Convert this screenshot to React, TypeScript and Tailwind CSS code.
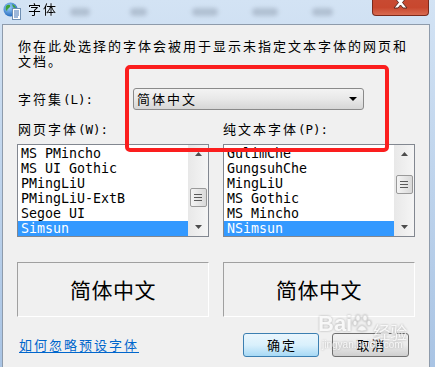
import React from "react";

const CJK = "font-['Noto_Sans_CJK_SC',sans-serif]";

function Label({ cjk, ascii }: { cjk: string; ascii: string }) {
  return (
    <span className="whitespace-nowrap">
      {cjk}
      <span className="font-['DejaVu_Sans_Mono',monospace] text-[12.5px] tracking-normal">{ascii}</span>
    </span>
  );
}

function Scrollbar({ thumbPad }: { thumbPad: string }) {
  return (
    <div className="w-[20px] flex flex-col bg-gradient-to-r from-[#e8e8e8] to-[#f5f5f5]">
      <div className="h-[18px] flex items-center justify-center">
        <svg width="7" height="4" viewBox="0 0 7 4">
          <path d="M0 4 L3.5 0 L7 4 Z" fill="#4d4d4d" />
        </svg>
      </div>
      <div className={`flex-1 ${thumbPad} flex justify-center`}>
        <div className="w-[17px] h-[19px] rounded-[2px] border border-[#9a9a9a] bg-gradient-to-r from-[#f4f4f4] to-[#d9d9d9] flex flex-col items-center justify-center gap-[2px]">
          <div className="w-[8px] h-[1px] bg-[#5a5a5a]" />
          <div className="w-[8px] h-[1px] bg-[#5a5a5a]" />
          <div className="w-[8px] h-[1px] bg-[#5a5a5a]" />
        </div>
      </div>
      <div className="h-[18px] flex items-center justify-center">
        <svg width="7" height="4" viewBox="0 0 7 4">
          <path d="M0 0 L7 0 L3.5 4 Z" fill="#4d4d4d" />
        </svg>
      </div>
    </div>
  );
}

function ListBox({ items, thumbPad }: { items: string[]; thumbPad: string }) {
  return (
    <div className="w-[192px] h-[93px] border border-[#828790] bg-white flex">
      <div className="flex-1 pt-[1px] overflow-hidden font-['DejaVu_Sans_Mono',monospace] text-[13.3px]">
        {items.map((it, i) => (
          <div
            key={it}
            className={
              i === items.length - 1
                ? "h-[15px] leading-[15px] pl-[3px] whitespace-nowrap bg-[#3399ff] text-white"
                : "h-[15px] leading-[15px] pl-[3px] whitespace-nowrap text-black"
            }
          >
            {it}
          </div>
        ))}
      </div>
      <Scrollbar thumbPad={thumbPad} />
    </div>
  );
}

function Preview() {
  return (
    <div className="w-[192px] h-[55px] border border-t-[#a0a0a0] border-l-[#a0a0a0] border-r-white border-b-white flex items-center justify-center text-[21px] tracking-[0.5px] text-black">
      简体中文
    </div>
  );
}

export default function App() {
  return (
    <div className={`relative w-[435px] h-[367px] overflow-hidden bg-gradient-to-b from-[#d3e3f4] to-[#a9c4e4] ${CJK}`}>
      {/* blurred background menu seen through glass */}
      <div className="absolute left-[70px] top-[8px] w-[20px] h-[8px] rounded-sm bg-[#a3b2c4] blur-[2px] opacity-70" />
      <div className="absolute left-[130px] top-[8px] w-[17px] h-[8px] rounded-sm bg-[#a3b2c4] blur-[2px] opacity-70" />
      <div className="absolute left-[192px] top-[8px] w-[26px] h-[8px] rounded-sm bg-[#a3b2c4] blur-[2px] opacity-70" />
      <div className="absolute left-[252px] top-[8px] w-[26px] h-[8px] rounded-sm bg-[#a3b2c4] blur-[2px] opacity-70" />
      <div className="absolute left-[312px] top-[8px] w-[21px] h-[8px] rounded-sm bg-[#a3b2c4] blur-[2px] opacity-70" />

      {/* title bar */}
      <div className="relative h-[24px] flex items-start">
        <div className="ml-[3px] mt-[2px] w-[18px] h-[18px]">
          <svg width="18" height="18" viewBox="0 0 18 18">
            <defs>
              <radialGradient id="g" cx="0.4" cy="0.35" r="0.7">
                <stop offset="0" stopColor="#9fd3ff" />
                <stop offset="1" stopColor="#1b62b8" />
              </radialGradient>
            </defs>
            <circle cx="7.5" cy="7.5" r="7" fill="url(#g)" />
            <path d="M3 4 Q5 2 7 3 Q8 5 6 6 Q4 7 4 9 Q2 8 3 4 Z" fill="#3fa23a" />
            <path d="M9 2 Q12 3 13 6 Q11 6 10 5 Z" fill="#3fa23a" />
            <rect x="9.5" y="6.5" width="8" height="11" fill="#ffffff" stroke="#6f8fb3" strokeWidth="1" />
            <line x1="11" y1="9" x2="16" y2="9" stroke="#3a6fb3" strokeWidth="1" />
            <line x1="11" y1="11" x2="16" y2="11" stroke="#3a6fb3" strokeWidth="1" />
            <line x1="11" y1="13" x2="16" y2="13" stroke="#3a6fb3" strokeWidth="1" />
            <line x1="11" y1="15" x2="15" y2="15" stroke="#3a6fb3" strokeWidth="1" />
          </svg>
        </div>
        <div className="ml-[7px] mt-[2px] text-[13px] tracking-[2px] leading-[14px] text-black drop-shadow-[0_0_2px_rgba(255,255,255,0.9)]">
          字体
        </div>
        <div className="ml-auto mr-[6px] w-[57px] h-[16px] rounded-b-[4px] border border-t-0 border-[#7a2a1c] bg-gradient-to-b from-[#c84a32] via-[#c8472e] to-[#d86a50] flex justify-center overflow-hidden">
          <svg width="17" height="13" viewBox="0 0 17 13" className="mt-[-4px]">
            <path d="M2 1 L6 1 L8.5 4 L11 1 L15 1 L10.5 6.5 L15 12 L11 12 L8.5 9 L6 12 L2 12 L6.5 6.5 Z" fill="#ffffff" stroke="#5a2a22" strokeWidth="1" />
          </svg>
        </div>
      </div>

      {/* content panel */}
      <div className="ml-[2px] mr-[5px] h-[343px] border border-b-0 border-[#8e9bab] bg-[#f0f0f0] text-black">
        <div className="pt-[13px] pl-[15px] text-[13px] tracking-[2px] leading-[15px]">
          你在此处选择的字体会被用于显示未指定文本字体的网页和
          <br />
          文档。
        </div>

        <div className="mt-[20px] h-[22px] flex items-center pl-[15px] text-[13px] tracking-[2px] leading-[14px]">
          <div className="w-[115px]">
            <Label cjk="字符集" ascii="(L):" />
          </div>
          <div className="w-[231px] h-[22px] rounded-[3px] border border-[#8a8a8a] bg-gradient-to-b from-[#f3f3f3] via-[#e8e8e8] to-[#d6d6d6] flex items-center pl-[3px] pr-[6px]">
            <span>简体中文</span>
            <svg width="8" height="4" viewBox="0 0 8 4" className="ml-auto">
              <path d="M0 0 L8 0 L4 4 Z" fill="#000000" />
            </svg>
          </div>
        </div>

        <div className="mt-[12px] h-[14px] flex pl-[15px] text-[13px] tracking-[2px] leading-[14px]">
          <div className="w-[205px]">
            <Label cjk="网页字体" ascii="(W):" />
          </div>
          <div>
            <Label cjk="纯文本字体" ascii="(P):" />
          </div>
        </div>

        <div className="mt-[8px] flex pl-[14px] gap-[14px]">
          <ListBox
            items={["MS PMincho", "MS UI Gothic", "PMingLiU", "PMingLiU-ExtB", "Segoe UI", "Simsun"]}
            thumbPad="pt-[25px]"
          />
          <ListBox
            items={["GulimChe", "GungsuhChe", "MingLiU", "MS Gothic", "MS Mincho", "NSimsun"]}
            thumbPad="pt-[12px]"
          />
        </div>

        <div className="mt-[25px] flex pl-[14px] gap-[14px]">
          <Preview />
          <Preview />
        </div>

        <div className="mt-[16px] h-[24px] flex items-center pl-[16px] pr-[20px] text-[13px] tracking-[2px] leading-[14px]">
          <a className="text-[#0066cc] underline underline-offset-2 cursor-pointer">如何忽略预设字体</a>
          <div className="ml-auto flex gap-[13px]">
            <div className="w-[76px] h-[24px] rounded-[3px] border border-[#3c7fb1] bg-gradient-to-b from-[#eaf6fd] via-[#d9f0fc] to-[#a7d9f5] flex items-center justify-center pl-[2px]">
              确定
            </div>
            <div className="w-[77px] h-[24px] rounded-[3px] border border-[#707070] bg-gradient-to-b from-[#f2f2f2] via-[#ebebeb] to-[#cfcfcf] flex items-center justify-center pl-[2px]">
              取消
            </div>
          </div>
        </div>
      </div>

      {/* red highlight box */}
      <div className="absolute left-[125px] top-[65px] w-[264px] h-[87px] border-4 border-[#fb1e1e] rounded-[5px]" />

      {/* watermark */}
      <div className="absolute left-[318px] top-[313px] flex items-end text-[#fafafa] opacity-80 drop-shadow-[0_0_1px_rgba(0,0,0,0.35)] pointer-events-none">
        <span className="font-['Liberation_Sans',sans-serif] font-bold text-[22px] leading-[22px]">Bai</span>
        <svg width="20" height="20" viewBox="0 0 20 20" className="mb-[2px]">
          <g fill="#f8f8f8" stroke="#cfcfcf" strokeWidth="0.8">
            <ellipse cx="6" cy="5" rx="2.2" ry="3" />
            <ellipse cx="13" cy="5" rx="2.2" ry="3" />
            <ellipse cx="3" cy="10" rx="2" ry="2.6" />
            <ellipse cx="17" cy="10" rx="2" ry="2.6" />
            <path d="M5 17 Q10 8 15 17 Q10 19 5 17 Z" />
          </g>
        </svg>
        <span className="text-[17px] leading-[18px] ml-[1px] mb-[-6px]">经验</span>
      </div>
      <div className="absolute left-[322px] top-[339px] font-['Liberation_Sans',sans-serif] text-[10px] leading-[11px] text-[#fafafa] opacity-80 drop-shadow-[0_0_1px_rgba(0,0,0,0.35)] pointer-events-none">
        jingyan.baidu.com
      </div>
    </div>
  );
}
